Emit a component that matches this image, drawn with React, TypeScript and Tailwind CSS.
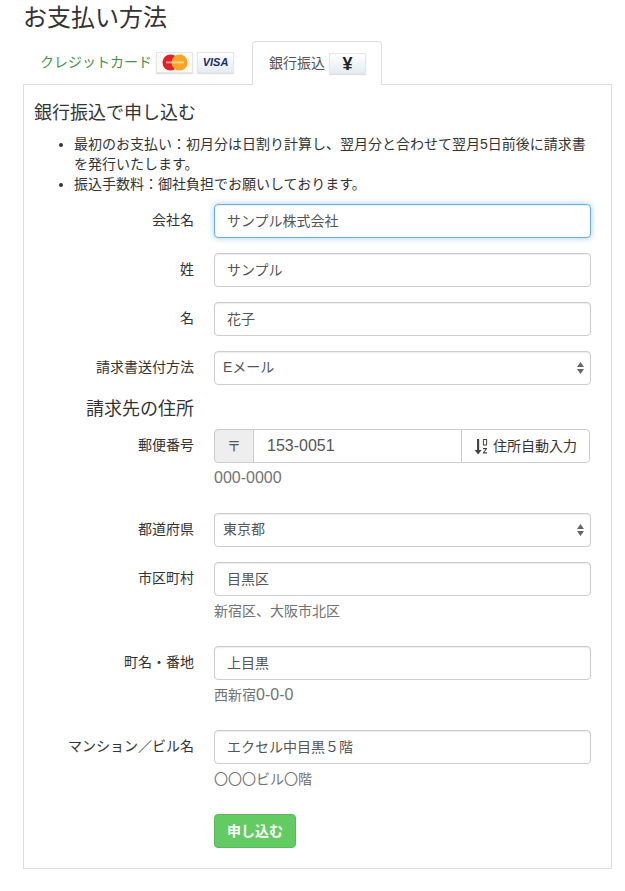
import React from 'react';

const FONT = '"Liberation Sans", "Noto Sans CJK JP", sans-serif';

function CardBadge({ children, className = '' }: { children: React.ReactNode; className?: string }) {
  return (
    <span className={`flex h-[21px] w-[37px] items-center justify-center border border-[#e6e6e6] shadow-[0_1px_1px_rgba(0,0,0,0.12)] ${className}`}>
      {children}
    </span>
  );
}

function MasterCard() {
  return (
    <svg width="26" height="17" viewBox="0 0 26 17">
      <circle cx="8.5" cy="8.5" r="8" fill="#e2202c" />
      <circle cx="17.5" cy="8.5" r="8" fill="#f8a526" />
      <rect x="4" y="7.4" width="18" height="2" fill="#fff" opacity="0.5" />
    </svg>
  );
}

function SortIcon() {
  return (
    <svg width="14" height="17" viewBox="0 0 14 17" className="text-[#444]">
      <path d="M3 1h2.2v11h2.4L4.1 16.5.6 12H3z" fill="currentColor" />
      <rect x="9.4" y="1.5" width="3.2" height="5.5" fill="none" stroke="currentColor" strokeWidth="1" />
      <path d="M9 10h4v1l-2.6 3.2H13v1.3H9v-1l2.6-3.2H9z" fill="currentColor" />
    </svg>
  );
}

function Row({ label, help, children }: { label: string; help?: React.ReactNode; children: React.ReactNode }) {
  return (
    <div className="mb-[15px] flex">
      <label className="w-[170px] shrink-0 pt-[6px] text-right text-[14px] leading-[20px] text-[#333]">{label}</label>
      <div className="ml-[20px] w-[377px]">
        {children}
        {help && <p className="mt-[5px] mb-[10px] h-[20px] text-[14px] leading-[20px] text-[#737373]">{help}</p>}
      </div>
    </div>
  );
}

function TextInput({ value, focus }: { value: string; focus?: boolean }) {
  return (
    <input
      readOnly
      value={value}
      className={`block h-[34px] w-full rounded-[4px] border bg-white px-3 pb-[2px] text-[14px] text-[#555] outline-none ${
        focus
          ? 'border-[#66afe9] shadow-[inset_0_1px_1px_rgba(0,0,0,0.075),0_0_6px_rgba(102,175,233,0.6)]'
          : 'border-[#ccc] shadow-[inset_0_1px_1px_rgba(0,0,0,0.075)]'
      }`}
    />
  );
}

function SelectBox({ value }: { value: string }) {
  return (
    <div className="relative h-[34px] w-full">
      <select
        defaultValue={value}
        className="block h-full w-full appearance-none rounded-[4px] border border-[#ccc] bg-white pb-[2px] pl-2 pr-6 text-[14px] text-[#555] shadow-[inset_0_1px_1px_rgba(0,0,0,0.075)] outline-none"
      >
        <option>{value}</option>
      </select>
      <svg width="7" height="12" viewBox="0 0 7 12" className="pointer-events-none absolute right-[7px] top-[11px]">
        <path d="M3.5 0L7 5H0zM3.5 12L0 7h7z" fill="#666" />
      </svg>
    </div>
  );
}

export default function App() {
  return (
    <div className="min-h-[891px] w-[625px] bg-white pl-[23px] text-[#333]" style={{ fontFamily: FONT }}>
      <h1 className="pt-[4px] text-[24px] leading-[28px] font-normal text-[#333]">お支払い方法</h1>

      {/* Tabs */}
      <div className="mt-[9px] flex h-[44px] w-[589px] items-start">
        <div className="flex h-[43px] w-[229px] items-center pl-[17px]">
          <span className="text-[14px] text-[#4b8f4b]">クレジットカード</span>
          <CardBadge className="ml-[4px] bg-[#fffaf3]">
            <MasterCard />
          </CardBadge>
          <CardBadge className="ml-[4px] bg-gradient-to-b from-white to-[#e4ecf5]">
            <span className="text-[11px] font-bold italic text-[#1a2a6c]">VISA</span>
          </CardBadge>
        </div>
        <div className="relative z-10 flex h-[44px] w-[130px] items-center rounded-t-[4px] border border-b-0 border-[#ddd] bg-white pl-[16px]">
          <span className="text-[14px] text-[#555]">銀行振込</span>
          <CardBadge className="ml-[4px] bg-gradient-to-b from-white to-[#e4ecf5]">
            <span className="text-[18px] font-bold leading-none text-[#222]">¥</span>
          </CardBadge>
        </div>
      </div>

      {/* Panel */}
      <div className="-mt-px h-[785px] w-[589px] border border-[#ddd] pt-[18px]">
        <h3 className="pl-[10px] text-[18px] leading-[20px] font-normal text-[#333]">銀行振込で申し込む</h3>
        <ul className="mt-[11px] mb-[10px] list-disc pl-[50px] pr-[20px] text-[14px] leading-[20px] text-[#333]">
          <li>最初のお支払い：初月分は日割り計算し、翌月分と合わせて翌月5日前後に請求書を発行いたします。</li>
          <li>振込手数料：御社負担でお願いしております。</li>
        </ul>

        <Row label="会社名">
          <TextInput value="サンプル株式会社" focus />
        </Row>
        <Row label="姓">
          <TextInput value="サンプル" />
        </Row>
        <Row label="名">
          <TextInput value="花子" />
        </Row>
        <Row label="請求書送付方法">
          <SelectBox value="Eメール" />
        </Row>

        <h4 className="-mt-[2px] mb-[9px] w-[170px] text-right text-[18px] leading-[22px] font-normal text-[#333]">請求先の住所</h4>

        <Row label="郵便番号" help={<span className="text-[16px]">000-0000</span>}>
          <div className="flex h-[34px] w-[376px]">
            <span className="flex w-[40px] items-center justify-center rounded-l-[4px] border border-[#ccc] bg-[#eee] text-[14px] text-[#555]">〒</span>
            <input
              readOnly
              value="153-0051"
              className="h-full w-[207px] border-y border-[#ccc] bg-white pl-[13px] pr-3 text-[16px] text-[#555] outline-none"
            />
            <button className="flex flex-1 items-center justify-center gap-[5px] rounded-r-[4px] border border-[#ccc] bg-white text-[14px] text-[#333]">
              <SortIcon />
              住所自動入力
            </button>
          </div>
        </Row>
        <Row label="都道府県">
          <SelectBox value="東京都" />
        </Row>
        <Row label="市区町村" help="新宿区、大阪市北区">
          <TextInput value="目黒区" />
        </Row>
        <Row label="町名・番地" help={<>西新宿<span className="text-[16px]">0-0-0</span></>}>
          <TextInput value="上目黒" />
        </Row>
        <Row label="マンション／ビル名" help="〇〇〇ビル〇階">
          <TextInput value="エクセル中目黒５階" />
        </Row>

        <div className="pl-[190px]">
          <button className="h-[34px] w-[82px] rounded-[4px] border border-[#5cb85c] bg-[#62cb62] text-[14px] font-bold text-white">
            申し込む
          </button>
        </div>
      </div>
    </div>
  );
}
